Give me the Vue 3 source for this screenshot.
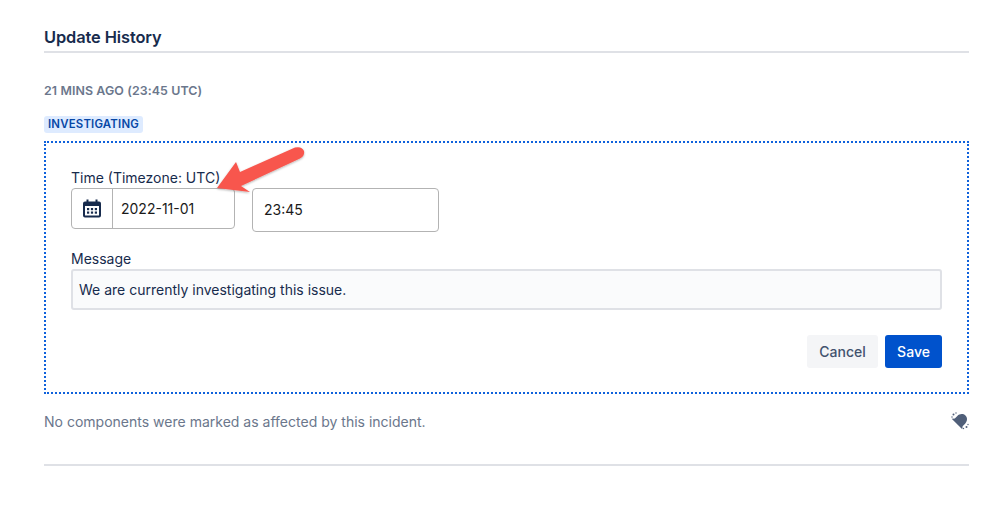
<template>
  <div class="page">
    <h2 class="title">Update History</h2>

    <div class="update">
      <div class="ago">21 MINS AGO (23:45 UTC)</div>
      <span class="badge">INVESTIGATING</span>

      <form class="editor" @submit.prevent>
        <label class="label">Time (Timezone: UTC)</label>
        <div class="time-row">
          <div class="date-group">
            <span class="date-icon">
              <svg width="20" height="20" viewBox="0 0 20 20">
                <path fill="#172b4d" fill-rule="evenodd" d="M4.500 0.500h2v2h7v-2h2v2h1.500A2 2 0 0 1 19 4.500v12a2 2 0 0 1-2 2H3a2 2 0 0 1-2-2v-12a2 2 0 0 1 2-2h1.500v-2zM3 7v9a.5.5 0 0 0 .5.500h13a.5.5 0 0 0 .5-.5V7H3z" />
                <rect v-for="dot in calendarDots" :key="dot.x + '-' + dot.y" :x="dot.x" :y="dot.y" width="2.200" height="2.200" fill="#172b4d" />
              </svg>
            </span>
            <span class="date-value">2022-11-01</span>
          </div>
          <div class="time-input">23:45</div>
        </div>

        <label class="label message-label">Message</label>
        <div class="message">We are currently investigating this issue.</div>

        <div class="actions">
          <button type="button" class="btn cancel">Cancel</button>
          <button type="submit" class="btn save">Save</button>
        </div>

        <!-- annotation arrow on top of the form -->
        <svg class="arrow" width="100" height="60" viewBox="0 0 100 60">
          <defs>
            <filter id="arrow-shadow" x="-20%" y="-20%" width="140%" height="150%">
              <feDropShadow dx="0" dy="1" stdDeviation="1" flood-color="#000" flood-opacity="0.3" />
            </filter>
          </defs>
          <path
            fill="#f8574e"
            filter="url(#arrow-shadow)"
            d="M2 44 L21 18 L25 28 L80 3.500 Q87 2 89 7 Q90 12 85 14.500 L26 42 L35 48 Z"
          />
        </svg>
      </form>

      <div class="footer-row">
        <span class="note">No components were marked as affected by this incident.</span>
        <svg class="bell" width="18" height="18" viewBox="0 0 18 18">
          <g fill="#505f79">
            <path transform="rotate(45 9.500 8.500)" d="M9.500 1.500C13 1.500 15 4.500 15 7.500V11L17 13.500H2L4 11V7.500C4 4.500 6 1.500 9.500 1.500Z" />
            <circle cx="2.500" cy="2.500" r="1" />
            <circle cx="1" cy="5" r="0.700" />
            <circle cx="5" cy="1" r="0.700" />
            <circle cx="15.500" cy="15" r="1" />
            <circle cx="17" cy="12.500" r="0.700" />
            <circle cx="12.500" cy="16.500" r="0.700" />
          </g>
        </svg>
      </div>
    </div>

    <hr class="rule" />
  </div>
</template>

<script setup>
// 3 x 2 dots inside the calendar icon
const calendarDots = []
for (const y of [9, 12.500]) {
  for (const x of [5, 8.900, 12.800]) {
    calendarDots.push({ x, y })
  }
}
</script>

<style>
html, body {
  margin: 0;
  background: #fff;
}
</style>

<style scoped>
.page {
  width: 925px;
  height: 526px;
  padding: 0 30px 0 44px;
  font-family: Inter, "Liberation Sans", sans-serif;
  color: #172b4d;
  overflow: hidden;
}

.title {
  margin: 0;
  padding: 27px 0 4px;
  height: 20px;
  line-height: 20px;
  font-size: 16.400px;
  font-weight: 600;
  letter-spacing: -0.1px;
  border-bottom: 2px solid #dfe1e6;
}

.update {
  padding-top: 30px;
}

.ago {
  height: 16px;
  line-height: 16px;
  font-size: 12.400px;
  font-weight: 600;
  letter-spacing: 0.1px;
  color: #6b778c;
}

.badge {
  display: block;
  width: 99px;
  box-sizing: border-box;
  height: 17px;
  line-height: 17px;
  margin-top: 17px;
  background: #deebff;
  border-radius: 3px;
  color: #0747a6;
  font-size: 11.400px;
  font-weight: 600;
  letter-spacing: 0.2px;
  text-align: center;
  white-space: nowrap;
}

.editor {
  position: relative;
  box-sizing: border-box;
  height: 253px;
  margin-top: 8px;
  padding: 26px 25px 0;
  border: 2px dotted #0f62dc;
}

.label {
  display: block;
  height: 18px;
  line-height: 18px;
  font-size: 14px;
}

.time-row {
  display: flex;
  gap: 17px;
  align-items: flex-start;
  margin-top: 1px;
}

.date-group {
  display: flex;
  box-sizing: border-box;
  width: 164px;
  height: 41px;
  border: 1px solid #b3b3b3;
  border-radius: 4px;
}

.date-icon {
  display: flex;
  align-items: center;
  justify-content: center;
  width: 40px;
  border-right: 1px solid #b3b3b3;
}

.date-value {
  padding-left: 8px;
  line-height: 39px;
  font-size: 14px;
  color: #1a1a1a;
}

.time-input {
  box-sizing: border-box;
  width: 187px;
  height: 44px;
  padding-left: 11px;
  line-height: 42px;
  font-size: 14px;
  color: #1a1a1a;
  border: 1px solid #b3b3b3;
  border-radius: 4px;
}

.message-label {
  margin-top: 18px;
}

.message {
  box-sizing: border-box;
  height: 41px;
  margin-top: 1px;
  padding-left: 6px;
  line-height: 37px;
  font-size: 14px;
  background: #fafbfc;
  border: 2px solid #dfe1e6;
  border-radius: 3px;
}

.actions {
  display: flex;
  justify-content: flex-end;
  gap: 7px;
  margin-top: 25px;
}

.btn {
  height: 33px;
  padding: 0;
  border: none;
  border-radius: 3px;
  font-family: inherit;
  font-size: 14px;
  font-weight: 500;
}

.cancel {
  width: 71px;
  background: #f4f5f7;
  color: #42526e;
}

.save {
  width: 57px;
  background: #0052cc;
  color: #fff;
}

.arrow {
  position: absolute;
  left: 169px;
  top: 1px;
}

.footer-row {
  display: flex;
  justify-content: space-between;
  align-items: center;
  height: 18px;
  margin-top: 18px;
}

.note {
  font-size: 14.030px;
  color: #6b778c;
}

.rule {
  height: 2px;
  margin: 34px 0 0;
  border: none;
  background: #dfe1e6;
}
</style>
